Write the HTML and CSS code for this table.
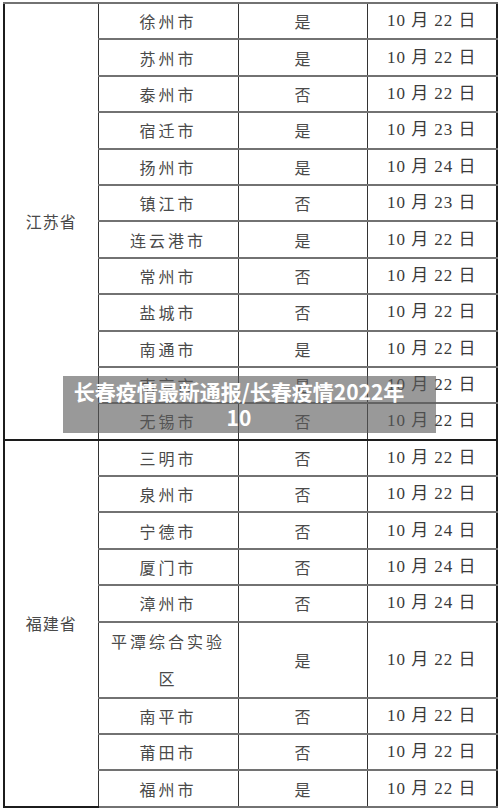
FILE: index.html
```html
<!DOCTYPE html>
<html lang="zh">
<head>
<meta charset="utf-8">
<link rel="stylesheet" href="styles.css">
</head>
<body>
<div class="page">
  <table class="grid">
    <colgroup>
      <col class="c1"><col class="c2"><col class="c3"><col class="c4">
    </colgroup>
    <tbody>
      <tr><td class="prov" rowspan="12">江苏省</td><td class="city">徐州市</td><td class="yn">是</td><td class="date">10 月 22 日</td></tr>
      <tr><td class="city">苏州市</td><td class="yn">是</td><td class="date">10 月 22 日</td></tr>
      <tr><td class="city">泰州市</td><td class="yn">否</td><td class="date">10 月 22 日</td></tr>
      <tr><td class="city">宿迁市</td><td class="yn">是</td><td class="date">10 月 23 日</td></tr>
      <tr><td class="city">扬州市</td><td class="yn">是</td><td class="date">10 月 24 日</td></tr>
      <tr><td class="city">镇江市</td><td class="yn">否</td><td class="date">10 月 23 日</td></tr>
      <tr><td class="city">连云港市</td><td class="yn">是</td><td class="date">10 月 22 日</td></tr>
      <tr><td class="city">常州市</td><td class="yn">否</td><td class="date">10 月 22 日</td></tr>
      <tr><td class="city">盐城市</td><td class="yn">否</td><td class="date">10 月 22 日</td></tr>
      <tr><td class="city">南通市</td><td class="yn">是</td><td class="date">10 月 22 日</td></tr>
      <tr><td class="city">南京市</td><td class="yn">是</td><td class="date">10 月 22 日</td></tr>
      <tr class="sep"><td class="city">无锡市</td><td class="yn">否</td><td class="date">10 月 22 日</td></tr>
      <tr><td class="prov" rowspan="9">福建省</td><td class="city">三明市</td><td class="yn">否</td><td class="date">10 月 22 日</td></tr>
      <tr><td class="city">泉州市</td><td class="yn">否</td><td class="date">10 月 22 日</td></tr>
      <tr><td class="city">宁德市</td><td class="yn">否</td><td class="date">10 月 24 日</td></tr>
      <tr><td class="city">厦门市</td><td class="yn">否</td><td class="date">10 月 24 日</td></tr>
      <tr><td class="city">漳州市</td><td class="yn">否</td><td class="date">10 月 24 日</td></tr>
      <tr class="tall"><td class="city wrap">平潭综合实验区</td><td class="yn">是</td><td class="date">10 月 22 日</td></tr>
      <tr><td class="city">南平市</td><td class="yn">否</td><td class="date">10 月 22 日</td></tr>
      <tr><td class="city">莆田市</td><td class="yn">否</td><td class="date">10 月 22 日</td></tr>
      <tr><td class="city">福州市</td><td class="yn">是</td><td class="date">10 月 22 日</td></tr>
    </tbody>
  </table>
  <div class="title">长春疫情最新通报/长春疫情2022年10</div>
</div>
</body>
</html>
```
FILE: styles.css
```css
html, body {
  margin: 0;
  padding: 0;
  background: #ffffff;
}
.page {
  position: relative;
  width: 500px;
  height: 810px;
  padding: 2px 0 0 3px;
  box-sizing: border-box;
  overflow: hidden;
}
.grid {
  border-collapse: collapse;
  table-layout: fixed;
  width: 493px;
  border: 2px solid #1c1c1c;
  font-family: "Noto Sans CJK SC", sans-serif;
  color: #4a4a4a;
}
.c1 { width: 94px; }
.c2 { width: 140px; }
.c3 { width: 129px; }
.c4 { width: 130px; }
.grid tr { height: 36.4px; }
.grid tr.tall { height: 73px; }
.grid td {
  border-top: 2px solid #727272;
  border-bottom: 2px solid #727272;
  border-left: 1.5px solid #333;
  border-right: 1.5px solid #333;
  padding: 0;
  text-align: center;
  vertical-align: middle;
  font-size: 16px;
  line-height: 20px;
}
.grid tr.sep td,
.grid td.prov {
  border-bottom: 2px solid #1c1c1c;
}
.prov {
  letter-spacing: 1px;
}
.city {
  letter-spacing: 3px;
  padding: 0 10px !important;
}
.city.wrap {
  line-height: 37px !important;
}
.date {
  font-family: "Liberation Serif", "Noto Sans CJK SC", serif;
  font-size: 17px !important;
  letter-spacing: 1px;
  color: #3a3a3a;
}
.title {
  position: absolute;
  left: 63px;
  top: 376px;
  width: 373px;
  height: 57px;
  box-sizing: border-box;
  padding: 2px 27px 0 6px;
  background: rgba(90, 90, 90, 0.62);
  color: #ffffff;
  font-family: "Noto Sans CJK SC", sans-serif;
  font-weight: 700;
  font-size: 21px;
  line-height: 26px;
  text-align: center;
  word-break: break-all;
}
```
